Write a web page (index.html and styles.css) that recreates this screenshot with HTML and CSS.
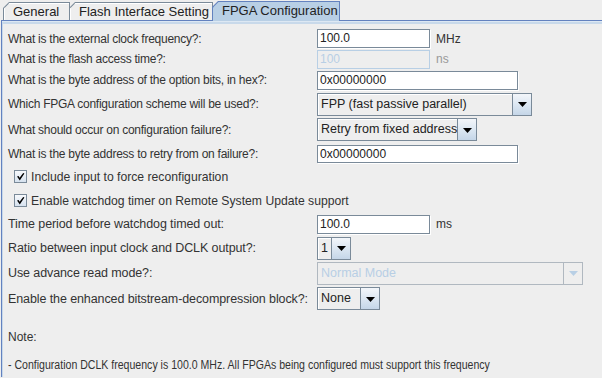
FILE: index.html
```html
<!DOCTYPE html>
<html>
<head>
<meta charset="utf-8">
<link rel="stylesheet" href="styles.css">
</head>
<body>
<div class="tabs">
  <div class="tab first"><div class="tab-in">General</div></div>
  <div class="tab"><div class="tab-in">Flash Interface Setting</div></div>
  <div class="tab selected"><div class="tab-in">FPGA Configuration</div></div>
</div>
<div class="panel">
  <div class="row r1">
    <span class="label">What is the external clock frequency?:</span>
    <div class="ctrl"><div class="field w113">100.0</div><span class="unit">MHz</span></div>
  </div>
  <div class="row r2">
    <span class="label">What is the flash access time?:</span>
    <div class="ctrl"><div class="field w113 disabled">100</div><span class="unit disabled-text">ns</span></div>
  </div>
  <div class="row r3">
    <span class="label">What is the byte address of the option bits, in hex?:</span>
    <div class="ctrl"><div class="field w201">0x00000000</div></div>
  </div>
  <div class="row r4">
    <span class="label">Which FPGA configuration scheme will be used?:</span>
    <div class="ctrl"><div class="combo w215"><div class="combo-text">FPP (fast passive parallel)</div><div class="combo-btn"><svg width="9" height="5" viewBox="0 0 9 5"><polygon points="0,0 9,0 4.5,5" fill="#000"/></svg></div></div></div>
  </div>
  <div class="row r5">
    <span class="label">What should occur on configuration failure?:</span>
    <div class="ctrl"><div class="combo w160"><div class="combo-text">Retry from fixed address</div><div class="combo-btn"><svg width="9" height="5" viewBox="0 0 9 5"><polygon points="0,0 9,0 4.5,5" fill="#000"/></svg></div></div></div>
  </div>
  <div class="row r6">
    <span class="label">What is the byte address to retry from on failure?:</span>
    <div class="ctrl"><div class="field w201 h18">0x00000000</div></div>
  </div>
  <div class="check-row r7">
    <span class="checkbox"><svg width="11" height="11" viewBox="0 0 11 11"><path d="M2 5.6 L3.6 5 L4.6 6.8 L8.2 2 L9.4 2.6 L4.8 9.4 Z" fill="#000"/></svg></span>
    <span class="check-label">Include input to force reconfiguration</span>
  </div>
  <div class="check-row r8">
    <span class="checkbox"><svg width="11" height="11" viewBox="0 0 11 11"><path d="M2 5.6 L3.6 5 L4.6 6.8 L8.2 2 L9.4 2.6 L4.8 9.4 Z" fill="#000"/></svg></span>
    <span class="check-label">Enable watchdog timer on Remote System Update support</span>
  </div>
  <div class="row r9">
    <span class="label lower">Time period before watchdog timed out:</span>
    <div class="ctrl"><div class="field w113">100.0</div><span class="unit">ms</span></div>
  </div>
  <div class="row r10">
    <span class="label lower">Ratio between input clock and DCLK output?:</span>
    <div class="ctrl"><div class="combo w34"><div class="combo-text">1</div><div class="combo-btn"><svg width="9" height="5" viewBox="0 0 9 5"><polygon points="0,0 9,0 4.5,5" fill="#000"/></svg></div></div></div>
  </div>
  <div class="row r11">
    <span class="label lower">Use advance read mode?:</span>
    <div class="ctrl"><div class="combo w266 combo-disabled"><div class="combo-text">Normal Mode</div><div class="combo-btn"><svg width="9" height="5" viewBox="0 0 9 5"><polygon points="0,0 9,0 4.5,5" fill="#b8cfe5"/></svg></div></div></div>
  </div>
  <div class="row r12">
    <span class="label lower">Enable the enhanced bitstream-decompression block?:</span>
    <div class="ctrl"><div class="combo w63"><div class="combo-text">None</div><div class="combo-btn"><svg width="9" height="5" viewBox="0 0 9 5"><polygon points="0,0 9,0 4.5,5" fill="#000"/></svg></div></div></div>
  </div>
  <div class="note">Note:</div>
  <div class="note-line">- Configuration DCLK frequency is 100.0 MHz. All FPGAs being configured must support this frequency</div>
</div>
</body>
</html>
```
FILE: styles.css
```css
html, body {
  margin: 0;
  padding: 0;
  background: #eeeeee;
  width: 602px;
  height: 378px;
  overflow: hidden;
  font-family: "Liberation Sans", Arial, sans-serif;
  font-size: 12px;
  color: #333333;
}

.tabs {
  display: flex;
  align-items: flex-end;
  height: 20px;
  padding-left: 3px;
  position: relative;
  z-index: 2;
}

.tab {
  background: #7a8a99;
  padding: 1px 1px 0 1px;
  height: 18px;
  box-sizing: border-box;
  clip-path: polygon(0 6px, 6px 0, 100% 0, 100% 100%, 0 100%);
  margin-left: -1px;
}
.tab.first { margin-left: 0; width: 67px; }
.tab:nth-child(2) { width: 144px; }
.tab.selected {
  width: 128px;
  height: 20px;
  margin-bottom: -1px;
  background: #6382bf;
}
.tab-in {
  height: 100%;
  background: #eeeeee;
  box-shadow: inset 1px 1px 0 #ffffff;
  clip-path: polygon(0 5.5px, 5.5px 0, 100% 0, 100% 100%, 0 100%);
  box-sizing: border-box;
  padding-left: 9px;
  line-height: 17px;
  white-space: nowrap;
  font-size: 13px;
  color: #222;
}
.tab.selected .tab-in {
  background: #b8cfe5;
  box-shadow: none;
  padding-left: 9px;
  line-height: 17px;
  height: 20px;
}

.panel {
  border-top: 1px solid #6382bf;
  border-left: 1px solid #6382bf;
  margin-left: 1px;
  box-shadow: inset 0 1px 0 #dde8f3, inset 0 3px 0 #c8d9ea, inset 1px 0 0 #c8d9ea;
  padding: 7px 0 0 6px;
  height: 357px;
  box-sizing: border-box;
  overflow: hidden;
}

.row {
  display: grid;
  grid-template-columns: 309px auto;
  align-items: center;
}
.r1 { height: 21px; }
.r2 { height: 20px; }
.r3 { height: 22px; }
.r4 { height: 26px; }
.r5 { height: 25px; }
.r6 { height: 23px; }
.r7 { height: 23px; }
.r8 { height: 25px; }
.r9 { height: 22px; }
.r10 { height: 26px; }
.r11 { height: 24px; }
.r12 { height: 27px; }

.label {
  white-space: nowrap;
  letter-spacing: -0.25px;
}
.label.lower {
  font-size: 12.5px;
  letter-spacing: -0.1px;
}

.ctrl {
  display: flex;
  align-items: center;
}

.field {
  height: 19px;
  box-sizing: border-box;
  border: 1px solid #7a8a99;
  box-shadow: 1px 1px 0 #ffffff;
  background: #ffffff;
  padding-left: 2px;
  line-height: 17px;
  color: #222;
}
.field.h18 { height: 18px; line-height: 16px; }
.field.disabled {
  background: #eeeeee;
  border-color: #b8cfe5;
  box-shadow: none;
  color: #b8cfe5;
}
.unit { margin-left: 6px; }
.disabled-text { color: #999999; }

.w113 { width: 113px; }
.w201 { width: 201px; }
.w215 { width: 215px; }
.w160 { width: 160px; }
.w34 { width: 34px; }
.w266 { width: 266px; }
.w63 { width: 63px; }

.combo {
  display: flex;
  height: 23px;
  box-sizing: border-box;
  border: 1px solid #7a8a99;
  background: #eeeeee;
}
.combo-text {
  flex: 1;
  border-right: 1px solid #7a8a99;
  box-shadow: inset 1px 1px 0 #ffffff;
  padding-left: 3px;
  line-height: 21px;
  font-size: 12.5px;
  white-space: nowrap;
  overflow: hidden;
  color: #222;
}
.combo-btn {
  width: 18px;
  background: linear-gradient(#f3f6fa, #dce7f2 50%, #c5d6e8);
  display: flex;
  align-items: center;
  justify-content: center;
  padding-top: 1px;
  box-sizing: border-box;
}
.combo-disabled {
  border-color: #b0b8c0;
}
.combo-disabled .combo-text {
  color: #b8cfe5;
  border-right-color: #b0b8c0;
  box-shadow: none;
}
.combo-disabled .combo-btn {
  background: #eeeeee;
}

.check-row {
  display: flex;
  align-items: center;
  padding-left: 6px;
}
.checkbox {
  width: 13px;
  height: 13px;
  box-sizing: border-box;
  border: 1px solid #7a8a99;
  background: linear-gradient(#f7f9fc, #d6e2ef);
  display: flex;
  align-items: center;
  justify-content: center;
}
.check-label {
  margin-left: 4px;
  font-size: 12.2px;
}

.note {
  margin-top: 18px;
  line-height: 15px;
}
.note-line {
  margin-top: 13px;
  line-height: 15px;
  white-space: nowrap;
  transform: scaleX(0.88);
  transform-origin: left center;
}
```
